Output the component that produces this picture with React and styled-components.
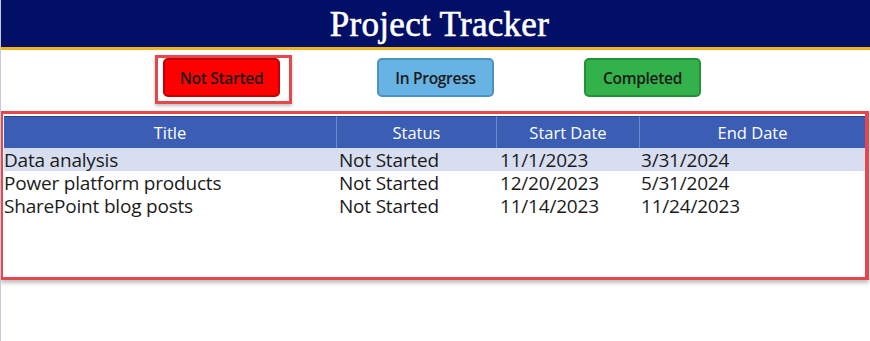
import React from "react";
import styled, { createGlobalStyle } from "styled-components";

const Global = createGlobalStyle`
  html, body { margin: 0; padding: 0; background: #fff; }
  body { font-family: "Open Sans", "Noto Sans", sans-serif; }
`;

const Page = styled.div`
  width: 870px;
  height: 341px;
  border-left: 1px solid #c9c9de;
  box-sizing: border-box;
  overflow: hidden;
`;

const Header = styled.header`
  height: 47px;
  background: #010f66;
  border-bottom: 3px solid #f0b41c;
  display: flex;
  align-items: center;
  justify-content: center;
  h1 {
    margin: 2px 0 0 8px;
    color: #fff;
    font-family: "Liberation Serif", "DejaVu Serif", serif;
    font-weight: normal;
    font-size: 35px;
    letter-spacing: 0.3px;
    -webkit-text-stroke: 0.6px #fff;
  }
`;

const FilterBar = styled.div`
  display: flex;
  padding: 8px 0 0 162px;
  height: 54px;
  box-sizing: border-box;
`;

const Filter = styled.div`
  position: relative;
  width: 117px;
  height: 39px;
  margin-left: ${(p) => p.$gap}px;
  box-sizing: border-box;
  border-radius: 5px;
  border: 2px solid ${(p) => p.$edge};
  background: ${(p) => p.$fill};
  color: #1a1a1a;
  font-size: 15.5px;
  font-weight: 600;
  display: flex;
  align-items: center;
  justify-content: center;
  letter-spacing: -0.3px;
  &::after {
    content: "";
    display: ${(p) => (p.$selected ? "block" : "none")};
    position: absolute;
    inset: -5px -14px -9px -10px;
    border: 3px solid #e5474d;
    box-shadow: 0 2px 3px rgba(0, 0, 0, 0.25);
  }
`;

const Gallery = styled.div`
  margin-top: 7px;
  height: 169px;
  width: 869px;
  box-sizing: border-box;
  border: 3px solid #e5474d;
  border-right-width: 4px;
  box-shadow: 0 3px 4px rgba(0, 0, 0, 0.25);
  padding: 2px 0 0 1px;
  margin-left: -1px;
`;

const Grid = styled.div`
  display: grid;
  grid-template-columns: 332px 160px 143px 1fr;
`;

const HeadCell = styled.div`
  height: 31px;
  background: #3b5db4;
  color: #fff;
  font-size: 16.5px;
  display: flex;
  align-items: center;
  justify-content: center;
  border-left: ${(p) => (p.$first ? "none" : "1px solid #6f8bd0")};
  border-top: 1px solid #2b438a;
`;

const Row = styled.div`
  display: contents;
  & > div {
    background: ${(p) => (p.$selected ? "#d7deef" : "transparent")};
  }
`;

const Cell = styled.div`
  height: 22px;
  padding-top: 1px;
  line-height: 23px;
  font-size: 19px;
  color: #1b1b1b;
  white-space: nowrap;
  padding-left: ${(p) => p.$pad}px;
  letter-spacing: -0.2px;
`;

const filters = [
  { label: "Not Started", fill: "#ff0000", edge: "#c40000", selected: true, gap: 0 },
  { label: "In Progress", fill: "#67b3e3", edge: "#4b93c2", gap: 97 },
  { label: "Completed", fill: "#33b24b", edge: "#23913a", gap: 90 },
];

const items = [
  ["Data analysis", "Not Started", "11/1/2023", "3/31/2024"],
  ["Power platform products", "Not Started", "12/20/2023", "5/31/2024"],
  ["SharePoint blog posts", "Not Started", "11/14/2023", "11/24/2023"],
];

const pads = [0, 3, 4, 2];

export default function App() {
  return (
    <Page>
      <Global />
      <Header>
        <h1>Project Tracker</h1>
      </Header>
      <FilterBar>
        {filters.map((f) => (
          <Filter
            key={f.label}
            $fill={f.fill}
            $edge={f.edge}
            $selected={f.selected}
            $gap={f.gap}
          >
            {f.label}
          </Filter>
        ))}
      </FilterBar>
      <Gallery>
        <Grid>
          {["Title", "Status", "Start Date", "End Date"].map((h, i) => (
            <HeadCell key={h} $first={i === 0}>{h}</HeadCell>
          ))}
          {items.map((r, i) => (
            <Row key={r[0]} $selected={i === 0}>
              {r.map((c, j) => (
                <Cell key={j} $pad={pads[j]}>{c}</Cell>
              ))}
            </Row>
          ))}
        </Grid>
      </Gallery>
    </Page>
  );
}
